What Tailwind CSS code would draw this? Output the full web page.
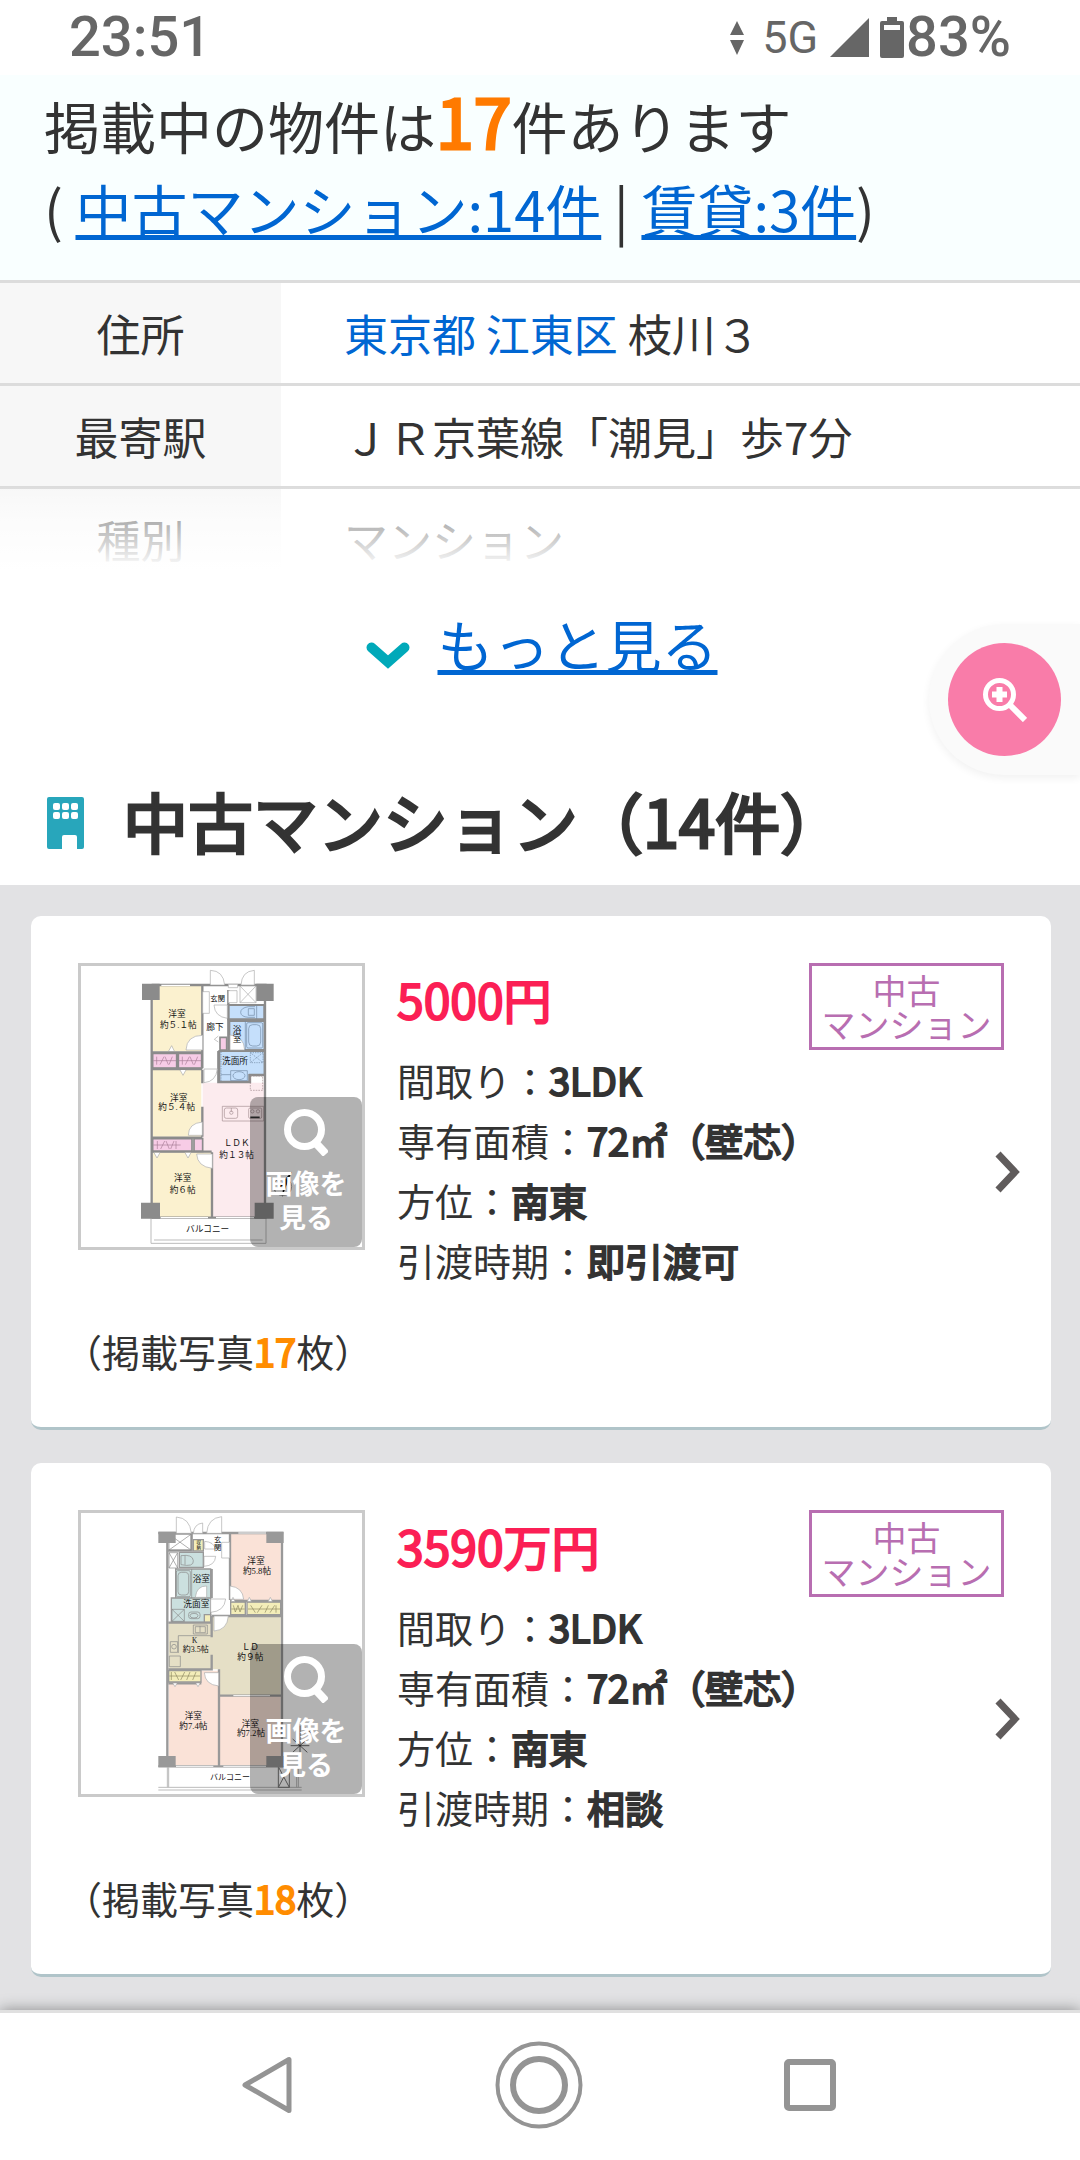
<!DOCTYPE html>
<html lang="ja">
<head>
    <meta charset="UTF-8">
    <meta name="viewport" content="width=device-width, initial-scale=1.0">
    <title>掲載中の物件</title>
    <script src="https://cdn.jsdelivr.net/npm/@tailwindcss/browser@4"></script>
</head>
<body class="bg-white text-[#333333] font-['Noto_Sans_CJK_JP',sans-serif]">
    <div class="relative min-h-screen flex flex-col overflow-hidden">
        <!-- ステータスバー -->
        <div class="h-[75px] px-[69px] flex items-center justify-between text-[#666666] font-[Roboto,sans-serif] font-medium text-[56px] leading-[75px]">
            <span>23:51</span>
            <div class="flex items-center">
                <svg class="w-[14px] h-[34px]" viewBox="0 0 14 34" fill="currentColor"><path d="M7 0l7 14H0zM7 34L0 19h14z"/></svg>
                <span class="ml-[18px] text-[45px] font-normal">5G</span>
                <svg class="ml-3 w-[39px] h-[39px]" viewBox="0 0 39 39" fill="currentColor"><path d="M39 0v39H0z"/></svg>
                <svg class="ml-[11px] w-6 h-[41px]" viewBox="0 0 24 41" fill="currentColor"><path fill-rule="evenodd" d="M7 0h10v4h5q2 0 2 2v33q0 2-2 2H2q-2 0-2-2V6q0-2 2-2h5zM4 8v5h16V8z"/></svg>
                <span class="ml-[2px]">83%</span>
            </div>
        </div>

        <header class="bg-[#f9ffff] pt-2 pb-[31px] px-11 text-[56px] leading-[83px]">
            <p class="h-[83px]">掲載中の物件は<strong class="text-[#ff7a00] text-[68px] font-normal leading-none [-webkit-text-stroke:3px]">17</strong>件あります</p>
            <p>( <a href="#used" class="text-[#0066d2] underline decoration-[5px]">中古マンション:14件</a> | <a href="#rent" class="text-[#0066d2] underline decoration-[5px]">賃貸:3件</a>)</p>
        </header>

        <!-- 物件概要 -->
        <div class="relative h-[290px] overflow-hidden">
            <table class="w-full border-collapse text-[44px] leading-[100px]">
                <tr class="border-t-[3px] border-[#dcdcdc]">
                    <th scope="row" class="w-[281px] p-0 bg-[#f7f7f7] font-normal">住所</th>
                    <td class="py-0 pl-[63px]"><a href="#tokyo" class="text-[#0066d2]">東京都</a> <a href="#koto" class="text-[#0066d2]">江東区</a> 枝川３</td>
                </tr>
                <tr class="border-t-[3px] border-[#dcdcdc]">
                    <th scope="row" class="p-0 bg-[#f7f7f7] font-normal">最寄駅</th>
                    <td class="py-0 pl-[63px]">ＪＲ京葉線「潮見」歩7分</td>
                </tr>
                <tr class="border-t-[3px] border-[#dcdcdc]">
                    <th scope="row" class="p-0 bg-[#f7f7f7] font-normal">種別</th>
                    <td class="py-0 pl-[63px]">マンション</td>
                </tr>
            </table>
            <div class="absolute inset-x-0 bottom-0 h-[84px] bg-linear-to-b from-white/0 via-white/60 via-40% to-white"></div>
        </div>

        <div class="pt-[31px] pb-[70px] pl-[3px] flex justify-center">
            <a href="#more" class="flex items-center gap-7 text-[56px] leading-[84px] text-[#0066d2]">
                <svg class="w-11 h-7 mt-[26px]" viewBox="0 0 44 28" fill="none" stroke="#00a9b9" stroke-width="10" stroke-linecap="round"><path d="M5.500 5.500L22 20L38.500 5.500"/></svg>
                <span class="underline decoration-[5px]">もっと見る</span>
            </a>
        </div>

        <div class="absolute right-0 top-[624px] w-[151px] h-[151px] pr-[19px] flex items-center justify-end rounded-l-full bg-[#fafafa] shadow-[0_3px_8px_rgba(0,0,0,0.06)]">
            <button type="button" aria-label="拡大" class="w-[113px] h-[113px] rounded-full bg-[#f97ca9] flex items-center justify-center">
                <svg class="w-11 h-11" viewBox="0 0 44 44" fill="none" stroke="#fff"><circle cx="16.500" cy="16.500" r="14" stroke-width="5"/><path stroke-width="6" d="M27 27L42 42M16.500 9v15M9 16.500h15"/></svg>
            </button>
        </div>

        <h2 id="used" class="h-[130px] px-[47px] flex items-center gap-[39px] text-[65px] leading-[130px] font-normal [-webkit-text-stroke:3px]">
            <svg class="w-[37px] h-[52px] mt-[6px]" viewBox="0 0 37 52"><path fill="#28a6bb" d="M2 0h33q2 0 2 2v48q0 2-2 2h-5V40q0-2-2-2H17q-2 0-2 2v12H2q-2 0-2-2V2q0-2 2-2z"/><g fill="#fff"><rect x="6" y="6" width="7" height="7" rx="2"/><rect x="15" y="6" width="7" height="7" rx="2"/><rect x="24" y="6" width="7" height="7" rx="2"/><rect x="6" y="15" width="7" height="7" rx="2"/><rect x="15" y="15" width="7" height="7" rx="2"/><rect x="24" y="15" width="7" height="7" rx="2"/></g></svg>
            中古マンション（14件）
        </h2>

        <main class="flex-1 bg-[#e2e2e4] pl-[31px] pr-[29px] pt-[31px] pb-[33px] flex flex-col gap-[33px]">
            <article class="relative bg-white rounded-[10px] border-b-[3px] border-[#b0c4c9] pt-[47px] pb-[46px] px-[33px]">
                <div class="px-[14px] flex items-start gap-8">
                    <div class="relative w-[287px] h-[287px] shrink-0 border-[3px] border-[#cacaca]">
                        <svg class="w-full h-full" viewBox="33 48 843 843" fill="none" stroke-width="3">
                            <path fill="#fff" stroke="#bbb" d="M243 800V880H588V800M252 870H578"/>
                            <g fill="#fbf1cf"><path d="M248 108h146v196H248zM248 360h146v200H248zM248 607h176v194H248z"/></g>
                            <path fill="#fcebee" d="M398 398H582V801H428V605H398z"/>
                            <g fill="#c5dffb" stroke="#8b8b8b" stroke-width="6"><path d="M475 165h108v43H475zM478 213h106v87H478zM448 303h136v72h-46v21h-90z"/></g>
                            <g fill="#f7cce6" stroke="#8b8b8b" stroke-width="5"><path d="M248 310h72v44h-72zM325 310h70v44h-70zM248 566h118v38H248zM372 566h26v38h-26zM450 262h20v38h-20z"/></g>
                            <g stroke="#a77b96" stroke-width="2"><path d="M250 332h68M260 320v24M270 344l12-24M285 320l10 24M297 344l10-24M327 332h66M337 320v24M346 344l12-24M360 320l10 24M373 344l10-24M250 585h82M262 573v24M272 597l12-24M288 573l10 24M302 597l10-24M318 573v24"/></g>
                            <g stroke="#8b8b8b" stroke-width="7"><path d="M245 105V801M245 105H590M585 105V801M397 108V355M245 307H397M245 357H397M397 360V400M397 470V560M245 563H397M245 605H425M426 607V801M245 803H590M475 120V300M445 303V396H540V375H585M245 803H560"/></g>
                            <path stroke="#fff" stroke-width="4" d="M274 106H360M272 803H365M310 803H414M438 803H552"/>
                            <path fill="#fff" stroke="#aaa" stroke-width="2" d="M421 105V61Q460 62 464 105zM553 105V61Q515 64 513 105zM510 108h48v50h-48zM510 108l48 50M558 108l-48 50M475 103h28v10h-28zM475 122h26v36h-26zM398 125h20v65h-20zM398 256Q350 256 348 300H398zM472 165H432Q434 200 472 205zM402 357H442Q438 395 402 398zM397 516Q355 520 355 556H397zM427 612H380Q382 650 427 655zM480 255Q522 258 524 300H480zM296 303l9-16 8 16M330 360l9 16 9-16M252 608l9 16 9-16M345 608l9 16 9-16M445 258l-12 10 12 8"/>
                            <g fill="#8b8b8b"><path d="M216 101h53v49h-53zM559 101h52v52h-52zM213 758h57v48h-57zM554 758h57v48h-57z"/></g>
                            <g stroke="#718aa5" stroke-width="2"><rect x="530" y="218" width="48" height="76" rx="4"/><rect x="536" y="224" width="36" height="64" rx="12"/><path d="M555 170H535Q512 174 512 187T535 202H555M535 176h18v20h-18zM560 165v42M526 213v87M482 362h50v30h-50zM453 374h29"/><ellipse cx="507" cy="377" rx="18" ry="12"/><path stroke-dasharray="4 3" d="M541 308h38v30h-38zM541 308l38 30M579 308l-38 30M453 305v88"/></g>
                            <g stroke="#a58e93" stroke-width="2"><path d="M457 469H581V513H457z"/><rect x="463" y="474" width="40" height="31" rx="6"/><rect x="536" y="474" width="39" height="31" rx="4"/><circle cx="484" cy="488" r="5"/><path d="M484 474v12"/><circle cx="547" cy="484" r="5"/><circle cx="564" cy="484" r="5"/><path stroke="#333" stroke-width="5" d="M541 502h28"/><path stroke-dasharray="5 3" d="M541 378h37v43h-37z"/></g>
                            <path fill="#111" d="M612 724L665 665L636 742L640 706z"/><circle cx="638" cy="710" r="27" stroke="#777" stroke-width="2"/>
                            <g class="font-['Liberation_Serif','Noto_Sans_CJK_JP',serif]" fill="#111" font-size="26" text-anchor="middle">
                                <text x="321" y="201">洋室</text><text x="325" y="234">約５.１帖</text>
                                <text x="326" y="453">洋室</text><text x="320" y="481">約５.４帖</text>
                                <text x="338" y="693">洋室</text><text x="338" y="728">約６帖</text>
                                <text x="443" y="154" font-size="22">玄関</text><text x="435" y="241">廊下</text>
                                <text x="501" y="249">浴</text><text x="501" y="275">室</text><text x="495" y="341">洗面所</text>
                                <text x="500" y="587">ＬＤＫ</text><text x="500" y="623">約１３帖</text>
                                <text x="413" y="846">バルコニー</text>
                            </g>
                        </svg>
                        <button type="button" class="absolute right-0 bottom-0 w-28 h-[150px] pt-3 flex flex-col items-center justify-start rounded-lg bg-black/30 text-white text-[27px] leading-[34px] font-bold">
                            <svg class="w-11 h-[47px] mb-[10px]" viewBox="0 0 44 47" fill="none" stroke="#fff"><circle cx="20.500" cy="20.500" r="17" stroke-width="7"/><path stroke-width="8" d="M29 31L42 45"/></svg>
                            <span>画像を<br>見る</span>
                        </button>
                    </div>
                    <div class="flex-1">
                        <div class="flex items-start justify-between">
                            <h3 class="text-[48px] leading-[71px] text-[#fb1f55] [-webkit-text-stroke:2px]">5000円</h3>
                            <span class="-mb-4 w-[195px] h-[87px] pt-[7px] border-[3px] border-[#b86eb1] text-[#b86eb1] text-[34px] leading-[34px] text-center">中古<br>マンション</span>
                        </div>
                        <dl class="mt-4 text-[38px] leading-[60px]">
                            <div class="flex"><dt>間取り：</dt><dd class="[-webkit-text-stroke:2px]">3LDK</dd></div>
                            <div class="flex"><dt>専有面積：</dt><dd class="[-webkit-text-stroke:2px]">72㎡（壁芯）</dd></div>
                            <div class="flex"><dt>方位：</dt><dd class="[-webkit-text-stroke:2px]">南東</dd></div>
                            <div class="flex"><dt>引渡時期：</dt><dd class="[-webkit-text-stroke:2px]">即引渡可</dd></div>
                        </dl>
                    </div>
                </div>
                <p class="mt-[31px] text-[38px] leading-[60px]">（掲載写真<span class="text-[#ff8c00] [-webkit-text-stroke:2px]">17</span>枚）</p>
                <a href="#detail1" aria-label="詳細" class="absolute inset-y-0 right-[30px] flex items-center">
                    <svg class="w-[26px] h-[42px]" viewBox="0 0 26 42" fill="none" stroke="#605c5c" stroke-width="7"><path d="M3 3L20 21L3 39"/></svg>
                </a>
            </article>

            <article class="relative bg-white rounded-[10px] border-b-[3px] border-[#b0c4c9] pt-[47px] pb-[46px] px-[33px]">
                <div class="px-[14px] flex items-start gap-8">
                    <div class="relative w-[287px] h-[287px] shrink-0 border-[3px] border-[#cacaca]">
                        <svg class="w-full h-full" viewBox="33 37 843 843" fill="none" stroke-width="3">
                            <g stroke="#bbb"><path d="M292 800V860M296 800V860M265 860H695M265 868H695M680 800V860M685 800V860"/><path stroke="#777" d="M625 798h33v62h-33zM625 798l33 62M658 798l-33 62"/></g>
                            <g fill="#fae2d7"><path d="M482 98h150v200H482zM296 510h150v284H296zM448 585h184v209H448z"/></g>
                            <path fill="#e5dfc6" d="M296 367H425V349H632V583H448V506H296z"/>
                            <g fill="#cbe0df" stroke="#999" stroke-width="4"><path d="M328 155h72v45h-72zM317 205h105v87H317zM304 292h118v73H304z"/></g>
                            <g fill="#f3edb9" stroke="#999" stroke-width="4"><path d="M482 304h44v38h-44zM531 304h101v38H531zM296 510h97v34h-97zM370 117h30v34h-30zM403 342h19v23h-19z"/></g>
                            <g stroke="#8b875f" stroke-width="2"><path d="M484 325h40M490 314l6 20 8-20 6 20 8-20M534 325h98M542 314l14 22M562 336l14-22M585 336l10-22M600 336l14-22M618 314v22M298 526h92M304 514v24M314 514l12 24M332 538l12-24M350 538l10-24M368 538l10-24"/></g>
                            <g stroke="#999" stroke-width="7"><path d="M292 96V797M265 97H640M636 97V797M480 97V298M480 301H636M425 346H636M425 205V292M296 366H422M425 346V410M425 462V506H296M296 548H394M447 506V797M448 585H636M265 797H640M365 97V150H292"/></g>
                            <path stroke="#fff" stroke-width="3" d="M505 97H588M318 797H430M460 797H588M490 585H600"/>
                            <path fill="#fff" stroke="#aaa" stroke-width="2" d="M319 98V49Q360 52 364 98zM455 98V48Q413 52 410 98zM398 98V67Q372 70 370 98zM404 122Q432 124 436 145H404zM402 167H437Q435 195 402 197zM480 256Q518 260 521 296H480zM422 295H467Q463 332 422 335zM432 346H475Q472 388 432 391zM446 516H403Q405 552 446 556zM376 290Q380 255 410 256V290zM309 548l6 10 6-10M378 548l6 10 6-10M532 302l6-12 6 12M595 302l6-12 6 12M483 302l6-12 6 12M455 125h24v47h-24z"/>
                            <g stroke="#888" stroke-width="2"><path d="M297 101h66v47h-66zM297 101l66 47M363 101l-66 47M297 156h26v46h-26zM297 156l26 46M323 156l-26 46M306 326h37v36h-37zM306 326l37 36M343 326l-37 36M333 165Q368 160 370 180T333 192zM345 165v27M365 205v87M370 373h42v27h-42zM376 378h30v18h-30zM390 376v18M301 423h22v32h-22zM325 405h97M325 405v52M298 466h33v32h-33z"/><rect x="319" y="210" width="42" height="78" rx="4"/><rect x="324" y="215" width="32" height="68" rx="10"/><rect x="356" y="334" width="34" height="20" rx="7"/><ellipse cx="372" cy="345" rx="12" ry="7"/><circle cx="312" cy="438" r="7"/></g>
                            <g fill="#999"><path d="M265 93h52v34h-52zM589 93h52v34h-52zM265 766h52v33h-52zM589 766h52v33h-52z"/></g>
                            <path stroke="#222" stroke-width="2" d="M690 675v95M662 735h56M668 715l44 40M712 715l-44 40M705 680l16 16M720 676l-16 22"/>
                            <g class="font-['Liberation_Serif','Noto_Sans_CJK_JP',serif]" fill="#111" font-size="26" text-anchor="middle">
                                <text x="558" y="191">洋室</text><text x="561" y="220">約5.8帖</text>
                                <text x="370" y="656">洋室</text><text x="370" y="685">約7.4帖</text>
                                <text x="541" y="679">洋室</text><text x="543" y="707">約7.2帖</text>
                                <text x="443" y="123" font-size="22">玄</text><text x="443" y="149" font-size="22">関</text>
                                <text x="386" y="131" font-size="13">収</text><text x="386" y="145" font-size="13">納</text>
                                <text x="394" y="245">浴室</text><text x="379" y="319">洗面室</text>
                                <text x="374" y="427" font-size="22">K</text><text x="377" y="454" font-size="24">約3.5帖</text>
                                <text x="541" y="449">ＬＤ</text><text x="541" y="477">約９帖</text>
                                <text x="480" y="838" font-size="24">バルコニー</text>
                            </g>
                        </svg>
                        <button type="button" class="absolute right-0 bottom-0 w-28 h-[150px] pt-3 flex flex-col items-center justify-start rounded-lg bg-black/30 text-white text-[27px] leading-[34px] font-bold">
                            <svg class="w-11 h-[47px] mb-[10px]" viewBox="0 0 44 47" fill="none" stroke="#fff"><circle cx="20.500" cy="20.500" r="17" stroke-width="7"/><path stroke-width="8" d="M29 31L42 45"/></svg>
                            <span>画像を<br>見る</span>
                        </button>
                    </div>
                    <div class="flex-1">
                        <div class="flex items-start justify-between">
                            <h3 class="text-[48px] leading-[71px] text-[#fb1f55] [-webkit-text-stroke:2px]">3590万円</h3>
                            <span class="-mb-4 w-[195px] h-[87px] pt-[7px] border-[3px] border-[#b86eb1] text-[#b86eb1] text-[34px] leading-[34px] text-center">中古<br>マンション</span>
                        </div>
                        <dl class="mt-4 text-[38px] leading-[60px]">
                            <div class="flex"><dt>間取り：</dt><dd class="[-webkit-text-stroke:2px]">3LDK</dd></div>
                            <div class="flex"><dt>専有面積：</dt><dd class="[-webkit-text-stroke:2px]">72㎡（壁芯）</dd></div>
                            <div class="flex"><dt>方位：</dt><dd class="[-webkit-text-stroke:2px]">南東</dd></div>
                            <div class="flex"><dt>引渡時期：</dt><dd class="[-webkit-text-stroke:2px]">相談</dd></div>
                        </dl>
                    </div>
                </div>
                <p class="mt-[31px] text-[38px] leading-[60px]">（掲載写真<span class="text-[#ff8c00] [-webkit-text-stroke:2px]">18</span>枚）</p>
                <a href="#detail2" aria-label="詳細" class="absolute inset-y-0 right-[30px] flex items-center">
                    <svg class="w-[26px] h-[42px]" viewBox="0 0 26 42" fill="none" stroke="#605c5c" stroke-width="7"><path d="M3 3L20 21L3 39"/></svg>
                </a>
            </article>
        </main>

        <!-- ナビゲーションバー -->
        <nav class="relative h-[150px] pb-[3px] pr-[2px] border-t-[3px] border-[#e0e0e0] bg-white shadow-[0_0_14px_rgba(0,0,0,0.4)] flex items-center justify-center gap-[181px]">
            <button type="button" aria-label="戻る" class="w-[90px] h-[90px]">
                <svg class="w-full h-full" viewBox="0 0 90 90" fill="none" stroke="#949494" stroke-width="5" stroke-linejoin="round"><path d="M66 19.500V70.500L22 45z"/></svg>
            </button>
            <button type="button" aria-label="ホーム" class="w-[90px] h-[90px]">
                <svg class="w-full h-full" viewBox="0 0 90 90" fill="none" stroke="#949494"><circle cx="45" cy="45" r="41.500" stroke-width="4"/><circle cx="45" cy="45" r="26" stroke-width="6"/></svg>
            </button>
            <button type="button" aria-label="履歴" class="w-[90px] h-[90px]">
                <svg class="w-full h-full" viewBox="0 0 90 90" fill="none" stroke="#949494" stroke-width="6" stroke-linejoin="round"><rect x="22" y="22" width="46" height="46" rx="2"/></svg>
            </button>
        </nav>
    </div>
</body>
</html>
